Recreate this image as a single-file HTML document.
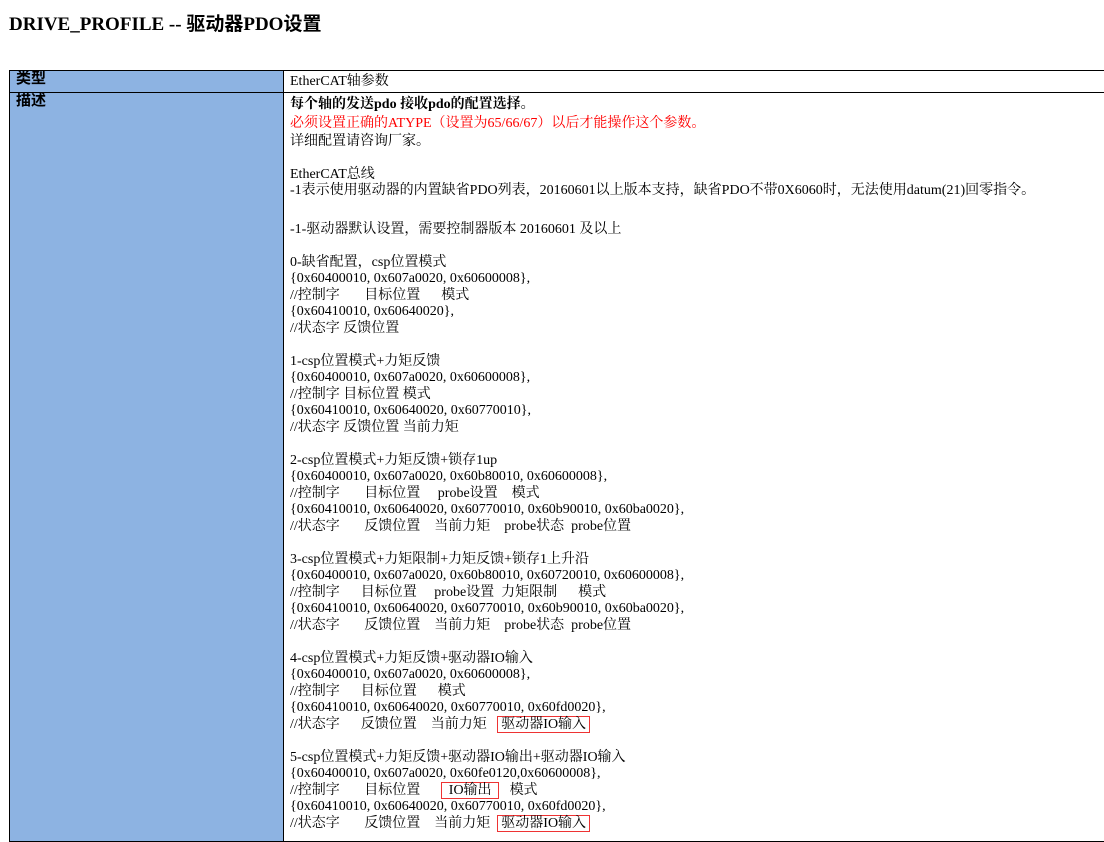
<!DOCTYPE html>
<html><head><meta charset="utf-8"><style>
body{margin:0;background:#fff;font-family:"Liberation Serif","Noto Serif CJK SC","Noto Sans CJK SC",serif;color:#000;}
h1{position:absolute;left:9px;top:9px;margin:0;font-size:19px;font-weight:bold;font-family:"Liberation Serif","Noto Sans CJK SC",serif;}
table{position:absolute;left:9px;top:70px;border-collapse:collapse;width:1110px;}
td{border:1px solid #000;vertical-align:top;font-size:14px;line-height:16.5px;padding:0 6px;}
td.h{background:#8db3e2;width:261px;font-weight:bold;font-family:"Liberation Sans","Noto Sans CJK SC",sans-serif;font-size:15px;line-height:15px;}
.r{color:#f00}
.b{border:1px solid #e33;padding:0 3px;}
</style></head><body>
<h1>DRIVE_PROFILE -- 驱动器PDO设置</h1>
<table>
<tr><td class="h" style="height:21px">类型</td><td style="padding-top:3px">EtherCAT轴参数</td></tr>
<tr><td class="h" style="height:748px">描述</td><td style="padding-top:4px">
<b>每个轴的发送pdo 接收pdo的配置选择。</b><br>
<span class="r" style="line-height:20px">必须设置正确的ATYPE（设置为65/66/67）以后才能操作这个参数。</span><br>
详细配置请咨询厂家。<br><br>
EtherCAT总线<br>
-1表示使用驱动器的内置缺省PDO列表，20160601以上版本支持，缺省PDO不带0X6060时，无法使用datum(21)回零指令。<br>
<div style="height:22px"></div>
-1-驱动器默认设置，需要控制器版本 20160601 及以上<br><br>
0-缺省配置，csp位置模式<br>
{0x60400010, 0x607a0020, 0x60600008},<br>
//控制字&nbsp;&nbsp;&nbsp;&nbsp;&nbsp;&nbsp; 目标位置&nbsp;&nbsp;&nbsp;&nbsp;&nbsp; 模式<br>
{0x60410010, 0x60640020},<br>
//状态字 反馈位置<br><br>
1-csp位置模式+力矩反馈<br>
{0x60400010, 0x607a0020, 0x60600008},<br>
//控制字 目标位置 模式<br>
{0x60410010, 0x60640020, 0x60770010},<br>
//状态字 反馈位置 当前力矩<br><br>
2-csp位置模式+力矩反馈+锁存1up<br>
{0x60400010, 0x607a0020, 0x60b80010, 0x60600008},<br>
//控制字&nbsp;&nbsp;&nbsp;&nbsp;&nbsp;&nbsp; 目标位置&nbsp;&nbsp;&nbsp;&nbsp; probe设置&nbsp;&nbsp;&nbsp; 模式<br>
{0x60410010, 0x60640020, 0x60770010, 0x60b90010, 0x60ba0020},<br>
//状态字&nbsp;&nbsp;&nbsp;&nbsp;&nbsp;&nbsp; 反馈位置&nbsp;&nbsp;&nbsp; 当前力矩&nbsp;&nbsp;&nbsp; probe状态&nbsp; probe位置<br><br>
3-csp位置模式+力矩限制+力矩反馈+锁存1上升沿<br>
{0x60400010, 0x607a0020, 0x60b80010, 0x60720010, 0x60600008},<br>
//控制字&nbsp;&nbsp;&nbsp;&nbsp;&nbsp; 目标位置&nbsp;&nbsp;&nbsp;&nbsp; probe设置&nbsp; 力矩限制&nbsp;&nbsp;&nbsp;&nbsp;&nbsp; 模式<br>
{0x60410010, 0x60640020, 0x60770010, 0x60b90010, 0x60ba0020},<br>
//状态字&nbsp;&nbsp;&nbsp;&nbsp;&nbsp;&nbsp; 反馈位置&nbsp;&nbsp;&nbsp; 当前力矩&nbsp;&nbsp;&nbsp; probe状态&nbsp; probe位置<br><br>
4-csp位置模式+力矩反馈+驱动器IO输入<br>
{0x60400010, 0x607a0020, 0x60600008},<br>
//控制字&nbsp;&nbsp;&nbsp;&nbsp;&nbsp; 目标位置&nbsp;&nbsp;&nbsp;&nbsp;&nbsp; 模式<br>
{0x60410010, 0x60640020, 0x60770010, 0x60fd0020},<br>
//状态字&nbsp;&nbsp;&nbsp;&nbsp;&nbsp; 反馈位置&nbsp;&nbsp;&nbsp; 当前力矩&nbsp;&nbsp; <span class="b">驱动器IO输入</span><br><br>
5-csp位置模式+力矩反馈+驱动器IO输出+驱动器IO输入<br>
{0x60400010, 0x607a0020, 0x60fe0120,0x60600008},<br>
//控制字&nbsp;&nbsp;&nbsp;&nbsp;&nbsp;&nbsp; 目标位置&nbsp;&nbsp;&nbsp;&nbsp;&nbsp; <span class="b">&nbsp;IO输出&nbsp;</span>&nbsp;&nbsp; 模式<br>
{0x60410010, 0x60640020, 0x60770010, 0x60fd0020},<br>
//状态字&nbsp;&nbsp;&nbsp;&nbsp;&nbsp;&nbsp; 反馈位置&nbsp;&nbsp;&nbsp; 当前力矩&nbsp; <span class="b">驱动器IO输入</span>
</td></tr>
</table>
</body></html>
